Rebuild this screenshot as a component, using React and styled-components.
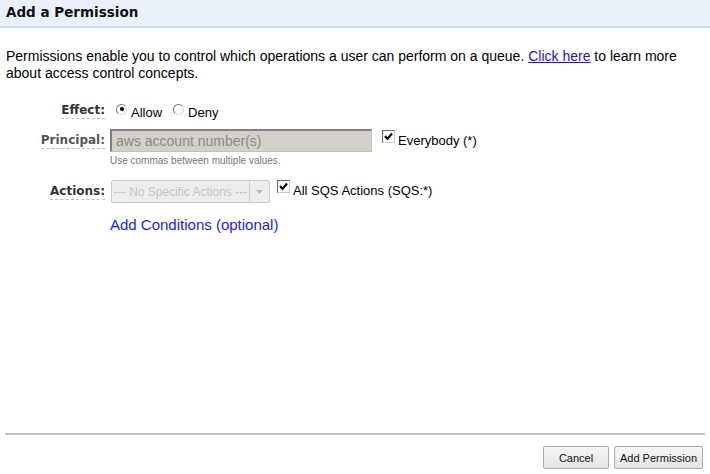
import React from 'react';
import styled, { createGlobalStyle } from 'styled-components';

const Global = createGlobalStyle`
  html, body { margin: 0; padding: 0; background: #fff; }
  body { font-family: "Liberation Sans", Arial, sans-serif; color: #000; }
`;

const Page = styled.div`
  display: flex;
  flex-direction: column;
  height: 474px;
  width: 710px;
`;

const Header = styled.div`
  height: 28px;
  box-sizing: border-box;
  background: #eaf1fd;
  border-bottom: 2px solid #cddcef;
  padding: 4px 6px 0;
  font-family: "DejaVu Sans", Verdana, sans-serif;
  font-weight: bold;
  font-size: 13.5px;
  color: #111;
`;

const Body = styled.div`
  flex: 1;
  padding: 20px 6px 0;
`;

const Intro = styled.p`
  margin: 0;
  font-size: 14px;
  line-height: 17px;
  a { color: #1a1ac8; text-decoration: underline; }
`;

const Form = styled.div`
  display: grid;
  grid-template-columns: 99px 1fr;
  column-gap: 5px;
  align-items: center;
`;

const Label = styled.div`
  justify-self: end;
  font-family: "DejaVu Sans", Verdana, sans-serif;
  font-weight: bold;
  font-size: 12px;
  color: ${p => (p.$muted ? '#555' : '#333')};
  border-bottom: 1px dashed #bbb;
  line-height: 15px;
  margin-top: ${p => p.$mt || 0}px;
`;

const Field = styled.div`
  display: flex;
  align-items: center;
  min-height: ${p => p.$h || 0}px;
  margin-top: ${p => p.$mt || 0}px;
  padding-left: ${p => p.$pl || 0}px;
`;

const Radio = styled.span`
  display: inline-flex;
  align-items: center;
  font-size: 13px;
  margin-right: 11px;
  position: relative;
  top: 1px;
`;

const RadioDot = styled.span`
  width: 9px;
  height: 9px;
  border-radius: 50%;
  border: 1px solid #777;
  border-right-color: #ddd;
  border-bottom-color: #ddd;
  margin-right: 4px;
  position: relative;
  top: -3px;
  &::after {
    content: '';
    display: ${p => (p.$on ? 'block' : 'none')};
    width: 4px;
    height: 4px;
    background: #000;
    border-radius: 50%;
    margin: 2.5px;
  }
`;

const TextBox = styled.div`
  width: 262px;
  height: 23px;
  box-sizing: border-box;
  background: #d4d0c8;
  border: 1px solid #c4c0b8;
  border-top: 2px solid #808080;
  border-left: 2px solid #808080;
  font-size: 14px;
  color: #8a8a8a;
  padding: 2px 4px;
`;

const Check = styled.span`
  width: 11px;
  height: 11px;
  border: 1px solid #666;
  border-right-color: #ccc;
  border-bottom-color: #ccc;
  background: #fff;
  display: inline-flex;
  align-items: center;
  justify-content: center;
  margin-right: 3px;
  position: relative;
  top: -4px;
`;

const CheckLabel = styled.span`
  display: inline-flex;
  align-items: center;
  font-size: 13px;
  margin-left: ${p => p.$ml || 0}px;
  margin-top: ${p => p.$mt || 0}px;
`;

const Hint = styled.div`
  grid-column: 2;
  font-size: 10px;
  line-height: 12px;
  color: #777;
  margin-top: 3px;
`;

const Select = styled.div`
  width: 159px;
  height: 23px;
  box-sizing: border-box;
  border: 1px solid #ccc;
  border-radius: 2px;
  background: #ededed;
  display: flex;
  font-size: 12px;
  color: #c4c4c4;
`;

const SelectText = styled.div`
  flex: 1;
  display: flex;
  align-items: center;
  justify-content: center;
`;

const SelectArrow = styled.div`
  width: 19px;
  border-left: 1px solid #ccc;
  display: flex;
  align-items: center;
  justify-content: center;
`;

const AddLink = styled.a`
  grid-column: 2;
  margin-top: 13px;
  font-size: 15px;
  line-height: 18px;
  color: #2222ee;
  text-decoration: none;
`;

const Footer = styled.div`
  margin: 0 5px;
  border-top: 2px solid #c2c2c2;
  display: flex;
  justify-content: flex-end;
  gap: 5px;
  padding: 11px 2px 5px 0;
`;

const Button = styled.button`
  height: 23px;
  width: ${p => p.$w}px;
  padding: 0;
  font-family: "Liberation Sans", Arial, sans-serif;
  font-size: 11px;
  color: #111;
  background: linear-gradient(#f6f6f6, #e4e4e4);
  border: 1px solid #a9a9a9;
  border-radius: 2px;
`;

const Tick = () => (
  <svg width="9" height="9" viewBox="0 0 9 9">
    <path d="M1 4 L3.5 7 L8 1.5" stroke="#000" strokeWidth="2" fill="none" />
  </svg>
);

export default function App() {
  return (
    <Page>
      <Global />
      <Header>Add a Permission</Header>
      <Body>
        <Intro>
          Permissions enable you to control which operations a user can perform on a queue.{' '}
          <a href="#">Click here</a> to learn more about access control concepts.
        </Intro>
        <Form>
          <Label $mt={17}>Effect:</Label>
          <Field $h={24} $mt={17} $pl={6}>
            <Radio><RadioDot $on />Allow</Radio>
            <Radio><RadioDot />Deny</Radio>
          </Field>

          <Label $muted $mt={6}>Principal:</Label>
          <Field $mt={6}>
            <TextBox>aws account number(s)</TextBox>
            <CheckLabel $ml={10}><Check><Tick /></Check>Everybody (*)</CheckLabel>
          </Field>
          <Hint>Use commas between multiple values.</Hint>

          <Label $mt={13}>Actions:</Label>
          <Field $mt={13} $pl={1}>
            <Select>
              <SelectText>--- No Specific Actions ---</SelectText>
              <SelectArrow>
                <svg width="7" height="4" viewBox="0 0 7 4"><path d="M0 0 H7 L3.5 4 Z" fill="#bbb" /></svg>
              </SelectArrow>
            </Select>
            <CheckLabel $ml={7} $mt={-2}><Check><Tick /></Check>All SQS Actions (SQS:*)</CheckLabel>
          </Field>

          <AddLink href="#">Add Conditions (optional)</AddLink>
        </Form>
      </Body>
      <Footer>
        <Button $w={66}>Cancel</Button>
        <Button $w={89}>Add Permission</Button>
      </Footer>
    </Page>
  );
}
